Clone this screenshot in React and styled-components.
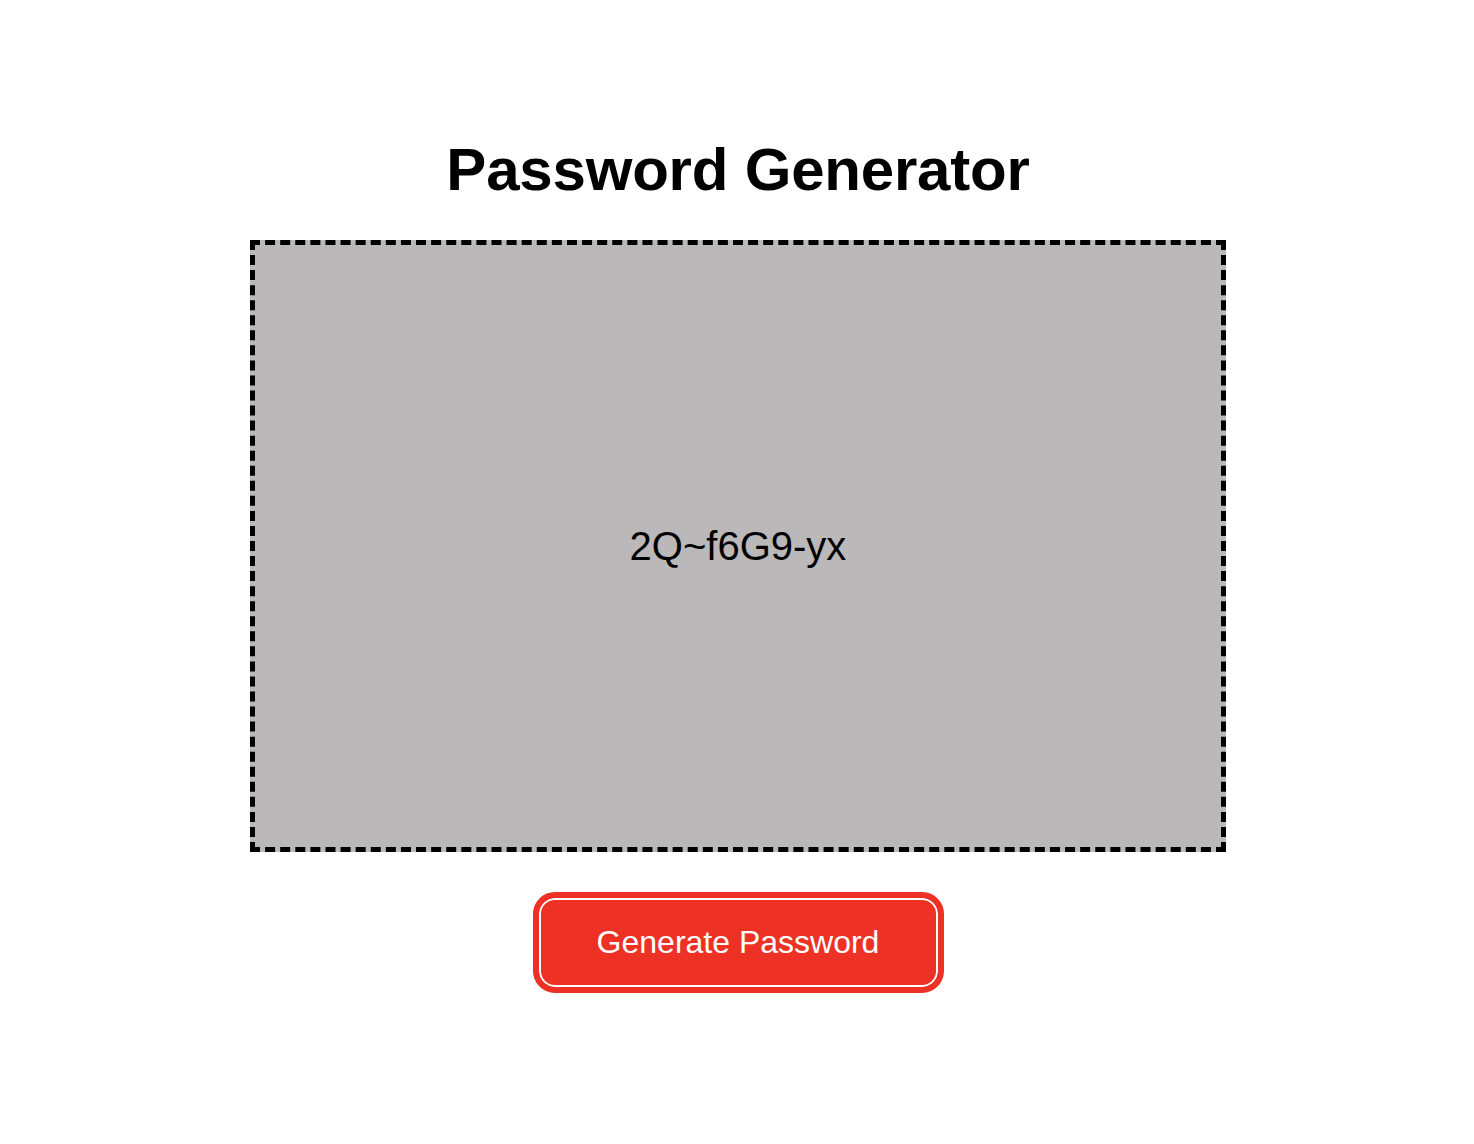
import styled, { createGlobalStyle } from "styled-components";

const GlobalStyle = createGlobalStyle`
  body {
    margin: 0;
    background: #ffffff;
    font-family: "Liberation Sans", Arial, sans-serif;
  }
`;

export default function App() {
  return (
    <>
      <GlobalStyle />
      <Page>
        <Title>Password Generator</Title>
        <PasswordBox>2Q~f6G9-yx</PasswordBox>
        <GenerateButton type="button">Generate Password</GenerateButton>
      </Page>
    </>
  );
}

const Page = styled.main`
  display: flex;
  flex-direction: column;
  align-items: center;
  padding: 132px 0 0 2px;
`;

const Title = styled.h1`
  margin: 0 0 32px;
  font-size: 60px;
  line-height: 76px;
  font-weight: bold;
  letter-spacing: -0.2px;
  color: #000;
`;

const PasswordBox = styled.div`
  box-sizing: border-box;
  width: 976px;
  height: 612px;
  display: flex;
  align-items: center;
  justify-content: center;
  background: #bab8b9;
  border: 5px dashed #000;
  font-size: 40px;
  color: #000;
`;

const GenerateButton = styled.button`
  box-sizing: border-box;
  margin-top: 40px;
  width: 411px;
  height: 101px;
  background: #ed3124;
  border: 6px solid #ed3124;
  border-radius: 22px;
  box-shadow: inset 0 0 0 2px #fff;
  color: #fff;
  font-family: "Liberation Sans", Arial, sans-serif;
  font-size: 32px;
  cursor: pointer;
`;
